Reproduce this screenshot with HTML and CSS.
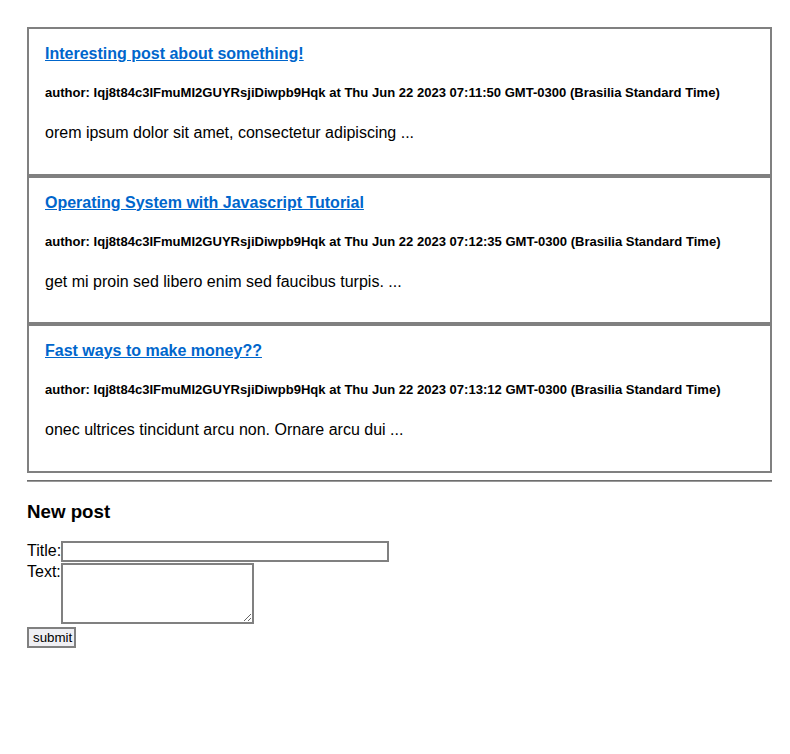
FILE: index.html
```html
<!DOCTYPE html>
<html>
<head>
<meta charset="utf-8">
<link rel="stylesheet" href="styles.css">
</head>
<body>
<div class="page">
  <div class="posts">
    <div class="post">
      <h4 class="post-title"><a href="#">Interesting post about something!</a></h4>
      <h5 class="post-author">author: Iqj8t84c3IFmuMI2GUYRsjiDiwpb9Hqk at Thu Jun 22 2023 07:11:50 GMT-0300 (Brasilia Standard Time)</h5>
      <p class="post-body">orem ipsum dolor sit amet, consectetur adipiscing ...</p>
    </div>
    <div class="post">
      <h4 class="post-title"><a href="#">Operating System with Javascript Tutorial</a></h4>
      <h5 class="post-author">author: Iqj8t84c3IFmuMI2GUYRsjiDiwpb9Hqk at Thu Jun 22 2023 07:12:35 GMT-0300 (Brasilia Standard Time)</h5>
      <p class="post-body">get mi proin sed libero enim sed faucibus turpis. ...</p>
    </div>
    <div class="post">
      <h4 class="post-title"><a href="#">Fast ways to make money??</a></h4>
      <h5 class="post-author">author: Iqj8t84c3IFmuMI2GUYRsjiDiwpb9Hqk at Thu Jun 22 2023 07:13:12 GMT-0300 (Brasilia Standard Time)</h5>
      <p class="post-body">onec ultrices tincidunt arcu non. Ornare arcu dui ...</p>
    </div>
  </div>
  <hr class="divider">
  <h3 class="new-heading">New post</h3>
  <form class="new-form">
    <div class="field field-title">
      <label class="field-label">Title:</label><input class="title-input" type="text">
    </div>
    <div class="field field-text">
      <label class="field-label">Text:</label><textarea class="text-input"></textarea>
    </div>
    <button class="submit-btn" type="button">submit</button>
  </form>
</div>
</body>
</html>
```
FILE: styles.css
```css
html, body {
  margin: 0;
  padding: 0;
  background: #fff;
}
body {
  font-family: "Liberation Sans", Arial, sans-serif;
  color: #000;
}
.page {
  padding: 27px 18px 0 27px;
}
.posts {
  display: flex;
  flex-direction: column;
}
.post {
  border: 2px solid #808080;
  padding: 16px 16px 31.5px;
}
.post-title {
  margin: 0;
  font-size: 16px;
  line-height: 18px;
  font-weight: bold;
}
.post-title a {
  color: #0066cc;
  text-decoration: underline;
}
.post-author {
  margin: 22px 0 0;
  font-size: 13.06px;
  line-height: 15px;
  font-weight: bold;
}
.post-body {
  margin: 24px 0 0;
  font-size: 16px;
  line-height: 18px;
}
.divider {
  margin: 7px 0 0;
  border: 0;
  border-top: 1px solid #6e6e6e;
  border-bottom: 1px solid #9a9a9a;
  height: 0;
}
.new-heading {
  margin: 19px 0 0;
  font-size: 18.72px;
  line-height: 22px;
  font-weight: bold;
}
.new-form {
  margin-top: 18px;
  display: flex;
  flex-direction: column;
  align-items: flex-start;
}
.field {
  display: flex;
}
.field-title {
  align-items: center;
}
.field-text {
  align-items: flex-start;
  margin-top: 1px;
}
.field-label {
  font-size: 16px;
  line-height: 18px;
  width: 34px;
}
.title-input {
  box-sizing: border-box;
  width: 328px;
  height: 21px;
  border: 2px solid #808080;
  margin: 0;
  padding: 1px 2px;
}
.text-input {
  box-sizing: border-box;
  width: 193px;
  height: 61px;
  border: 2px solid #808080;
  margin: 0;
  padding: 2px;
}
.submit-btn {
  margin-top: 3px;
  box-sizing: border-box;
  width: 49px;
  height: 21px;
  border: 2px solid #808080;
  background: #efeff3;
  font-family: "Liberation Sans", Arial, sans-serif;
  font-size: 13.33px;
  padding: 0 4px;
  color: #000;
}
```
